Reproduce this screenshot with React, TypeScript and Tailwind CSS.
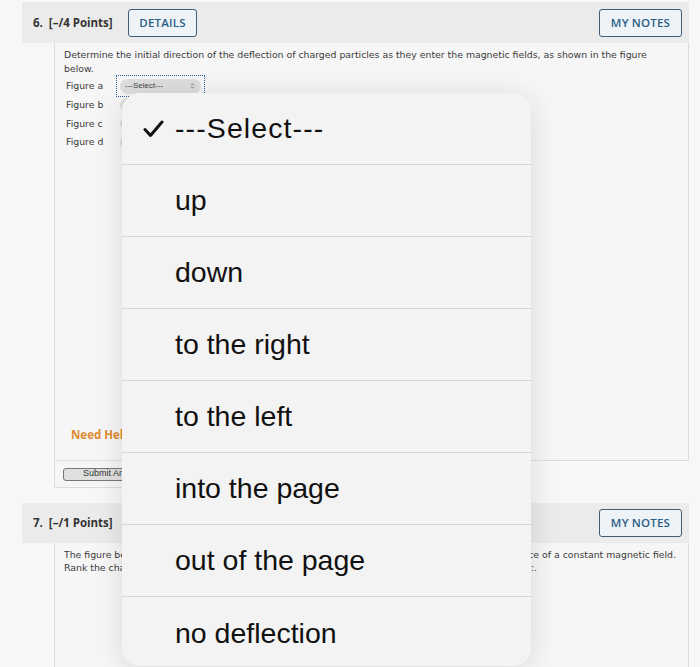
import React from "react";

const options = [
  "up",
  "down",
  "to the right",
  "to the left",
  "into the page",
  "out of the page",
  "no deflection",
];

function Btn({ label, w }: { label: string; w: string }) {
  return (
    <div
      className={`${w} h-[28px] flex items-center justify-center border-[1.5px] border-[#3f5d78] rounded-[3px] bg-[#eef3f7] text-[#2b5e85] text-[11.5px] font-semibold tracking-[0.2px]`}
      style={{ fontFamily: '"Open Sans", sans-serif' }}
    >
      {label}
    </div>
  );
}

export default function App() {
  const verd = { fontFamily: '"DejaVu Sans", Verdana, sans-serif' };
  const helv = { fontFamily: '"Liberation Sans", Arial, sans-serif' };
  return (
    <div className="relative w-[700px] h-[667px] overflow-hidden bg-[#f7f7f7]">
      <div className="pl-[22px] pt-[2px] w-[689px]">
        {/* Card 6 header */}
        <div className="h-[41px] bg-[#ebebeb] flex items-center pl-[11px] pr-[7px]">
          <span
            className="text-[11.5px] font-bold text-[#333] w-[95px]"
            style={{ fontFamily: '"Open Sans", sans-serif' }}
          >
            6.&nbsp; [–/4 Points]
          </span>
          <Btn label="DETAILS" w="w-[69px]" />
          <div className="flex-1" />
          <Btn label="MY NOTES" w="w-[83px]" />
        </div>
        {/* Card 6 body */}
        <div
          className="ml-[32px] h-[418px] border-l border-r border-b border-[#dcdcdc] bg-[#f6f6f6] pl-[9px] pt-[5px] text-[#3a3a3a] flex flex-col"
          style={verd}
        >
          <div className="text-[9.33px] leading-[14px] pr-[20px]">
            Determine the initial direction of the deflection of charged particles as they enter the magnetic fields, as shown in the figure below.
          </div>
          <div className="mt-[1px] flex flex-col">
            {["a", "b", "c", "d"].map((l, i) => (
              <div key={l} className="h-[18.7px] flex items-center">
                <span className="w-[52px] pl-[2px] text-[9.33px]">Figure {l}</span>
                {i === 0 ? (
                  <div className="w-[89px] h-[22px] border border-dotted border-[#2c5ea8] flex items-center px-[3px]">
                    <div
                      className="w-[81px] h-[15px] rounded-[8px] bg-[#dedede] flex items-center justify-between px-[5px] text-[8px] text-[#444]"
                      style={helv}
                    >
                      <span>---Select---</span>
                      <svg width="7" height="8" viewBox="0 0 7 8">
                        <path d="M2 3.3 L3.5 1.8 L5 3.3 M2 4.7 L3.5 6.2 L5 4.7" fill="none" stroke="#666" strokeWidth="0.8" />
                      </svg>
                    </div>
                  </div>
                ) : (
                  <div className="ml-[4px] w-[81px] h-[15px] rounded-[8px] bg-[#dedede]" />
                )}
              </div>
            ))}
          </div>
          <div className="flex-1" />
          <div
            className="pl-[7px] text-[11.5px] font-bold text-[#e08b2f]"
            style={{ fontFamily: '"Open Sans", sans-serif' }}
          >
            Need Help?
          </div>
          <div className="h-[17px]" />
        </div>
        {/* Card 6 footer */}
        <div className="ml-[32px] w-[300px] h-[27px] border-l border-b border-[#dcdcdc] bg-[#f6f6f6] pl-[8px] flex items-center">
          <div
            className="w-[100px] h-[13px] rounded-[3px] border border-[#777] bg-[#e0e0e0] text-[9px] text-[#333] flex items-center justify-center"
            style={helv}
          >
            Submit Answer
          </div>
        </div>
        <div className="h-[15px]" />
        {/* Card 7 header */}
        <div className="h-[40px] bg-[#ebebeb] flex items-center pl-[11px] pr-[7px]">
          <span
            className="text-[11.5px] font-bold text-[#333]"
            style={{ fontFamily: '"Open Sans", sans-serif' }}
          >
            7.&nbsp; [–/1 Points]
          </span>
          <div className="flex-1" />
          <Btn label="MY NOTES" w="w-[83px]" />
        </div>
        <div
          className="ml-[32px] h-[140px] border-l border-r border-[#dcdcdc] bg-[#f6f6f6] pl-[9px] pt-[5px] text-[#3a3a3a]"
          style={verd}
        >
          <div className="text-[9.33px] leading-[13px] pr-[12px] flex justify-between whitespace-nowrap">
            <span>The figure below shows</span>
            <span>in the presence of a constant magnetic field.</span>
          </div>
          <div className="text-[9.33px] leading-[13px] w-[473px] flex justify-between whitespace-nowrap">
            <span>Rank the charges</span>
            <span>by magnitude:.</span>
          </div>
        </div>
      </div>

      {/* Popup menu */}
      <div
        className="absolute left-[122px] top-[93px] w-[409px] h-[573px] rounded-[18px] bg-[#f3f3f3] shadow-[0_4px_30px_rgba(0,0,0,0.12)] overflow-hidden flex flex-col text-[#111]"
        style={helv}
      >
        <div className="h-[72px] shrink-0 flex items-center border-b border-[#d6d6d6]">
          <div className="w-[53px] pl-[21px] flex items-center">
            <svg width="21" height="18" viewBox="0 0 21 18">
              <path d="M2 9.5 L7.5 15.5 L19 2" fill="none" stroke="#111" strokeWidth="3" strokeLinecap="round" strokeLinejoin="round" />
            </svg>
          </div>
          <span className="text-[28.5px] tracking-[1.1px]">---Select---</span>
        </div>
        {options.map((o, i) => (
          <div
            key={o}
            className={`h-[72px] shrink-0 flex items-center pl-[53px] text-[28.5px] ${
              i < options.length - 1 ? "border-b border-[#d6d6d6]" : ""
            }`}
          >
            {o}
          </div>
        ))}
      </div>
    </div>
  );
}
